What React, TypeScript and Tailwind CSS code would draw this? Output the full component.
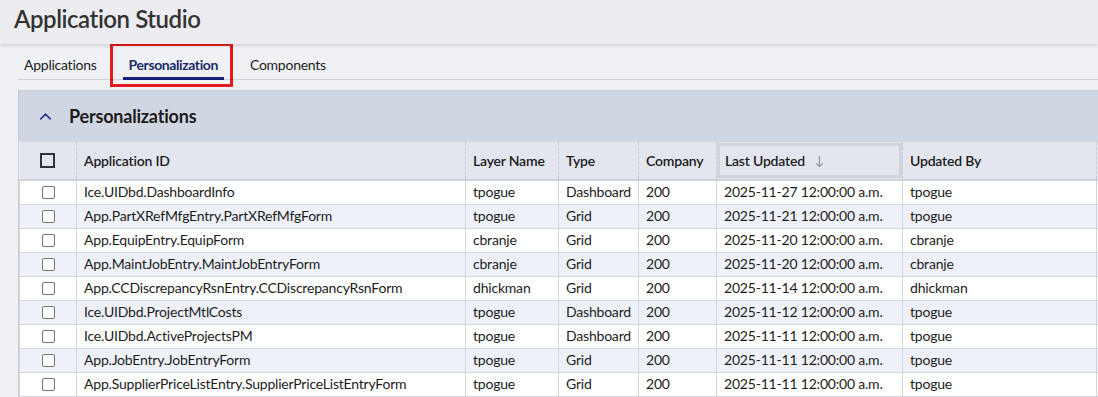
import { ChevronUp } from "lucide-react";

type Row = {
  appId: string;
  layer: string;
  type: string;
  company: string;
  updated: string;
  by: string;
};

const ROWS: Row[] = [
  { appId: "Ice.UIDbd.DashboardInfo", layer: "tpogue", type: "Dashboard", company: "200", updated: "2025-11-27 12:00:00 a.m.", by: "tpogue" },
  { appId: "App.PartXRefMfgEntry.PartXRefMfgForm", layer: "tpogue", type: "Grid", company: "200", updated: "2025-11-21 12:00:00 a.m.", by: "tpogue" },
  { appId: "App.EquipEntry.EquipForm", layer: "cbranje", type: "Grid", company: "200", updated: "2025-11-20 12:00:00 a.m.", by: "cbranje" },
  { appId: "App.MaintJobEntry.MaintJobEntryForm", layer: "cbranje", type: "Grid", company: "200", updated: "2025-11-20 12:00:00 a.m.", by: "cbranje" },
  { appId: "App.CCDiscrepancyRsnEntry.CCDiscrepancyRsnForm", layer: "dhickman", type: "Grid", company: "200", updated: "2025-11-14 12:00:00 a.m.", by: "dhickman" },
  { appId: "Ice.UIDbd.ProjectMtlCosts", layer: "tpogue", type: "Dashboard", company: "200", updated: "2025-11-12 12:00:00 a.m.", by: "tpogue" },
  { appId: "Ice.UIDbd.ActiveProjectsPM", layer: "tpogue", type: "Dashboard", company: "200", updated: "2025-11-11 12:00:00 a.m.", by: "tpogue" },
  { appId: "App.JobEntry.JobEntryForm", layer: "tpogue", type: "Grid", company: "200", updated: "2025-11-11 12:00:00 a.m.", by: "tpogue" },
  { appId: "App.SupplierPriceListEntry.SupplierPriceListEntryForm", layer: "tpogue", type: "Grid", company: "200", updated: "2025-11-11 12:00:00 a.m.", by: "tpogue" },
];

// header cells: solid bottom rule, dashed column separators
const thBase =
  "border-b-2 border-b-[#cfd2da] border-r border-r-[#c9cdd7] [border-right-style:dashed] text-left font-semibold";
const th = thBase + " px-[7px]";
const td = "border border-[#d3d5dc] px-[7px] whitespace-nowrap";

export default function App() {
  return (
    <div className="h-[397px] w-[1098px] overflow-hidden bg-[#f0f1f5] font-['Lato',sans-serif] text-[#1c1c1c]">
      <header className="relative z-10 flex h-11 items-start bg-[#ededf1] px-[14px] pt-[1px] shadow-[0_2px_3px_rgba(0,0,0,0.12)]">
        <h1 className="text-[24px] font-semibold tracking-[-0.45px] text-[#333]">Application Studio</h1>
      </header>

      <nav className="ml-[18px] flex h-[36px] items-end gap-5 border-b border-[#cfd1d7] text-sm">
        <button type="button" className="px-[6px] pb-[4px] tracking-[-0.25px]">Applications</button>
        <button type="button" className="relative px-[6px] pb-[4px] font-bold tracking-[-0.4px] text-[#1b2a6b]">
          Personalization
          <span className="absolute bottom-[-1px] left-0 right-0 h-[3px] bg-[#14207a]" />
          <span className="pointer-events-none absolute bottom-[-8px] left-[-13px] right-[-9px] top-[-12px] border-[3px] border-[#e3191e]" />
        </button>
        <button type="button" className="px-[6px] pb-[4px] tracking-[-0.25px]">Components</button>
      </nav>

      <section className="ml-[18px] mt-[10px] w-[1200px] border-l border-t border-[#c9ccd4]">
        <div className="flex h-[51px] items-center gap-[14px] bg-[#d1d7e2] pl-[17px]">
          <ChevronUp size={19} strokeWidth={2} className="text-[#2a3a8f]" />
          <h2 className="text-[18px] font-bold tracking-[-0.2px] text-[#1c1c1c]">Personalizations</h2>
        </div>
        <table className="w-[1197px] table-fixed border-collapse text-sm tracking-[-0.2px]">
          <colgroup>
            <col className="w-[57px]" />
            <col className="w-[389px]" />
            <col className="w-[93px]" />
            <col className="w-[80px]" />
            <col className="w-[78px]" />
            <col className="w-[186px]" />
            <col className="w-[194px]" />
            <col className="w-[120px]" />
          </colgroup>
          <thead>
            <tr className="h-[38px] bg-[#e3e6ef]">
              <th className={th + " text-center"}>
                <span className="mx-auto block h-[15px] w-[15px] border-2 border-[#333]" />
              </th>
              <th className={th}>Application ID</th>
              <th className={th}>Layer Name</th>
              <th className={th}>Type</th>
              <th className={th}>Company</th>
              <th className={thBase + " p-0"}>
                <div className="flex h-[35px] items-center gap-[10px] border-[3px] border-[#d0d3da] px-[5px]">
                  Last Updated
                  <span className="text-[13px] font-normal text-[#8a8d94]">↓</span>
                </div>
              </th>
              <th className={th}>Updated By</th>
              <th className={th} />
            </tr>
          </thead>
          <tbody>
            {ROWS.map((r, i) => (
              <tr key={r.appId} className={"h-6 " + (i % 2 === 1 ? "bg-[#eef1f9]" : "bg-white")}>
                <td className={td + " text-center"}>
                  <span className="mx-auto block h-[13px] w-[13px] rounded-[2px] border border-[#777] bg-white" />
                </td>
                <td className={td}>{r.appId}</td>
                <td className={td}>{r.layer}</td>
                <td className={td}>{r.type}</td>
                <td className={td}>{r.company}</td>
                <td className={td}>{r.updated}</td>
                <td className={td}>{r.by}</td>
                <td className={td} />
              </tr>
            ))}
          </tbody>
        </table>
      </section>
    </div>
  );
}
